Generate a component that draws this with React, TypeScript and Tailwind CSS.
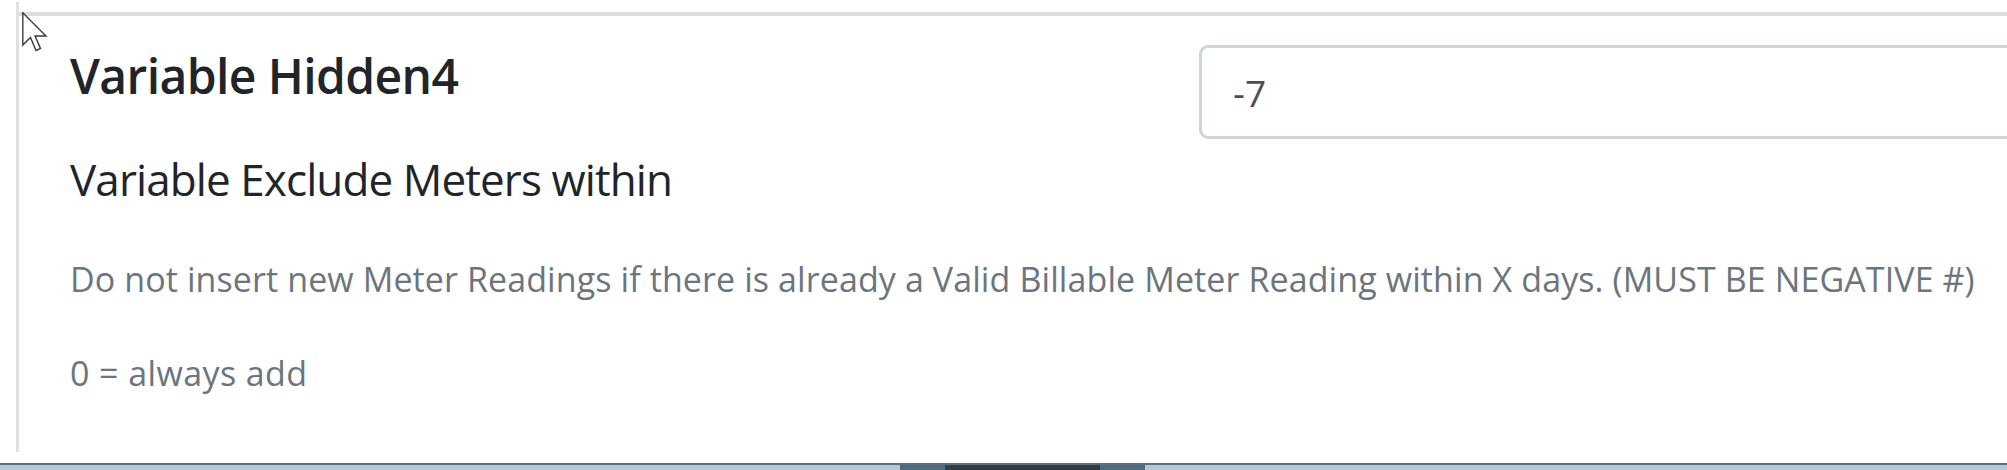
export default function App() {
  return (
    <div
      className="relative flex h-[470px] w-[2007px] flex-col overflow-hidden bg-white"
      style={{ fontFamily: '"Open Sans", "Noto Sans", sans-serif' }}
    >
      <div className="flex-1 overflow-hidden pl-[16px] pt-[2px] pb-[11px]">
        <div className="flex h-full flex-col border-l-[3px] border-[#e1e1e1]">
          <div className="mt-[10px] h-[4px] shrink-0 bg-[#dedede]" />
          <div className="pl-[51px]">
            <div className="mt-[29px] flex items-start">
              <h4 className="mt-[7px] w-[1129px] shrink-0 text-[48px] font-semibold leading-[48px] tracking-[-0.6px] text-[#212529]">
                Variable Hidden4
              </h4>
              <div className="flex h-[94px] w-[1000px] shrink-0 items-center rounded-[9px] border-[3px] border-[#ced4da] pl-[31px]">
                <span className="text-[37px] leading-[37px] text-[#495057]">-7</span>
              </div>
            </div>
            <p className="mt-[18px] whitespace-nowrap text-[44px] leading-[44px] tracking-[-0.9px] text-[#212529]">
              Variable Exclude Meters within
            </p>
            <p className="mt-[61px] whitespace-nowrap text-[34px] leading-[34px] tracking-[0.1px] text-[#6c757d]">
              Do not insert new Meter Readings if there is already a Valid Billable Meter Reading within X days. (MUST BE NEGATIVE #)
            </p>
            <p className="mt-[60px] whitespace-nowrap text-[34px] leading-[34px] tracking-[0.4px] text-[#6c757d]">
              0 = always add
            </p>
          </div>
        </div>
      </div>

      {/* taskbar edge */}
      <div className="flex h-[7px] border-t-[2px] border-[#5d6f7b] bg-[#b4c8d5]">
        <div className="ml-[900px] w-[45px] bg-[#4a6d83]" />
        <div className="w-[155px] bg-[#323c44]" />
        <div className="w-[45px] bg-[#4a6d83]" />
      </div>

      {/* mouse pointer */}
      <svg
        className="absolute left-[22px] top-[12px]"
        width="27"
        height="40"
        viewBox="0 0 27 40"
      >
        <path
          d="M0.8 0.8 L0.8 33 L8.5 25.5 L14 38.5 L18.5 36.5 L13 24 L24 24 Z"
          fill="#ffffff"
          stroke="#3a3a3a"
          strokeWidth="1.4"
          strokeLinejoin="miter"
        />
      </svg>
    </div>
  );
}
